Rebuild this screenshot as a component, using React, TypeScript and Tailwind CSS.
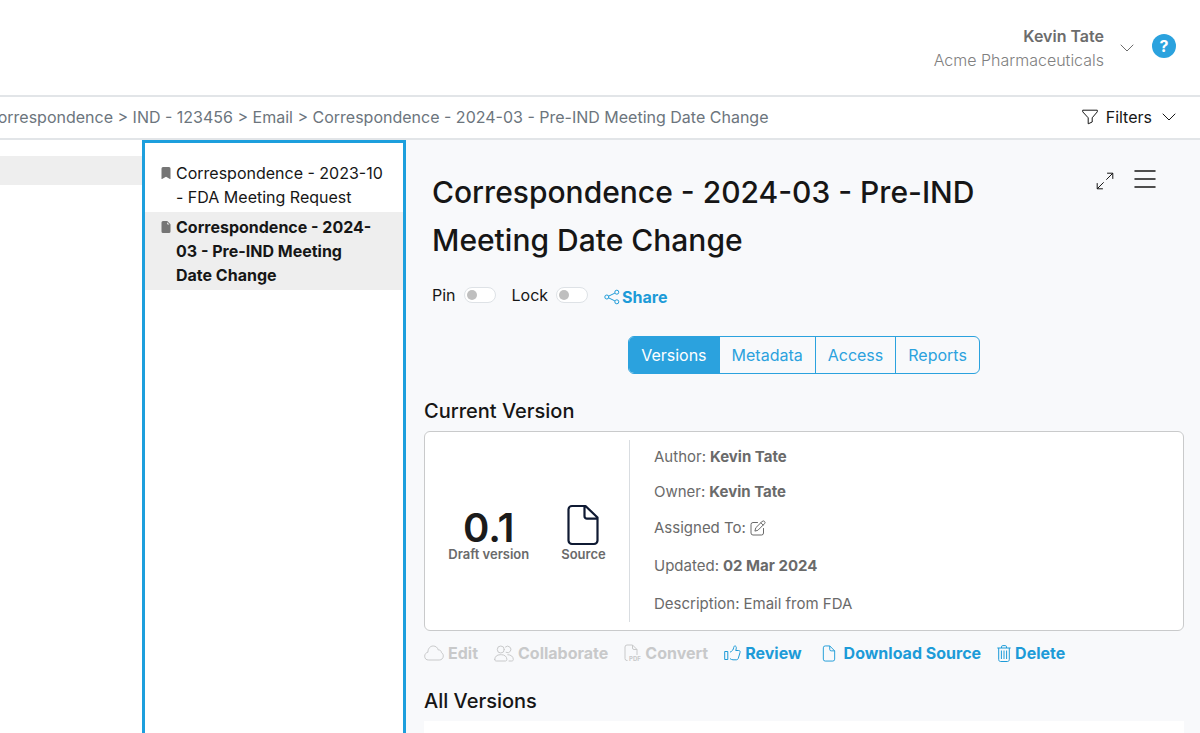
import React from 'react';
import { BsBookmarkFill, BsFileEarmarkFill } from 'react-icons/bs';

type IconProps = { className?: string };

const ChevronDown: React.FC<IconProps> = ({ className }) => (
  <svg viewBox="0 0 14 8" fill="none" stroke="currentColor" strokeLinecap="round" strokeLinejoin="round" className={className}>
    <path d="M1 1l6 6 6-6" />
  </svg>
);

const FunnelIcon: React.FC<IconProps> = ({ className }) => (
  <svg viewBox="0 0 16 16" fill="none" stroke="currentColor" strokeLinejoin="round" className={className}>
    <path d="M.7 1.2h14.6v1.6L10.2 8.8V13l-4 1.8v-6L.7 2.8z" />
  </svg>
);

const ExpandIcon: React.FC<IconProps> = ({ className }) => (
  <svg viewBox="0 0 18 18" fill="none" stroke="currentColor" strokeLinecap="round" strokeLinejoin="round" className={className}>
    <path d="M11.5 1.2h5.3v5.3M16.6 1.4l-6 6M6.5 16.8H1.2v-5.3M1.4 16.6l6-6" />
  </svg>
);

const MenuIcon: React.FC<IconProps> = ({ className }) => (
  <svg viewBox="0 0 22 18" fill="none" stroke="currentColor" strokeWidth="1.5" strokeLinecap="round" className={className}>
    <path d="M1 1h20M1 9h20M1 17h20" />
  </svg>
);

const ShareIcon: React.FC<IconProps> = ({ className }) => (
  <svg viewBox="0 0 16 16" fill="none" stroke="currentColor" className={className}>
    <circle cx="2.8" cy="8" r="2" />
    <circle cx="12.8" cy="3.2" r="2" />
    <circle cx="12.8" cy="12.8" r="2" />
    <path d="M4.7 7.1l6.2-3M4.7 8.9l6.2 3" />
  </svg>
);

const FileIcon: React.FC<IconProps> = ({ className }) => (
  <svg viewBox="0 0 14 18" fill="none" stroke="currentColor" strokeLinejoin="round" className={className}>
    <path d="M7.8 1H3a2 2 0 0 0-2 2v12a2 2 0 0 0 2 2h8a2 2 0 0 0 2-2V6.2zM7.8 1v3.7a1.5 1.5 0 0 0 1.5 1.5H13" />
  </svg>
);

const SourceIcon: React.FC<IconProps> = ({ className }) => (
  <svg viewBox="0 0 32 42" fill="none" stroke="currentColor" strokeWidth="2.2" strokeLinejoin="round" className={className}>
    <path d="M18.5 2H5a3.5 3.5 0 0 0-3.5 3.5v31A3.5 3.5 0 0 0 5 40h22a3.5 3.5 0 0 0 3.5-3.5V13.5zM17.5 2v10.2a2.5 2.5 0 0 0 2.5 2.5h10.5" />
  </svg>
);

const PencilSquareIcon: React.FC<IconProps> = ({ className }) => (
  <svg viewBox="0 0 16 16" fill="none" stroke="currentColor" strokeLinecap="round" strokeLinejoin="round" className={className}>
    <path d="M7.5 2.5H3a2 2 0 0 0-2 2V13a2 2 0 0 0 2 2h8.5a2 2 0 0 0 2-2V8.5" />
    <path d="M12.2 1.4a1.5 1.5 0 0 1 2.3 2.3L7.9 10.3l-3 .8.8-3zM10.9 2.8l2.3 2.3" />
  </svg>
);

const CloudIcon: React.FC<IconProps> = ({ className }) => (
  <svg viewBox="0 0 20 16" fill="none" stroke="currentColor" strokeLinejoin="round" className={className}>
    <path d="M4.8 15A4 4 0 0 1 .7 11.1c0-2 1.4-3.5 3.2-3.9C3.9 3.5 6.2 1 9.2 1c2.500 0 4.400 1.500 5 3.900 1.900-.1 3.100 1 3.200 2.700 1.200.5 1.900 1.800 1.900 3.300 0 2.400-1.700 4.100-4 4.100z" />
  </svg>
);

const UsersIcon: React.FC<IconProps> = ({ className }) => (
  <svg viewBox="0 0 20 17" fill="none" stroke="currentColor" strokeLinecap="round" strokeLinejoin="round" className={className}>
    <circle cx="6.8" cy="4.5" r="3.5" />
    <path d="M.7 14.5c0-2.900 2.300-4.800 5.500-4.800h1.200c3.200 0 5.500 1.900 5.500 4.800 0 1-.7 1.500-1.500 1.500H2.200c-.8 0-1.500-.5-1.500-1.500z" />
    <path d="M11.500 1.900a3.300 3.300 0 1 1 .6 5.500M13.800 9.700c3.200 0 5.500 1.900 5.500 4.800 0 1-.7 1.500-1.500 1.500H15" />
  </svg>
);

const PdfIcon: React.FC<IconProps> = ({ className }) => (
  <svg viewBox="0 0 17 18" fill="none" stroke="currentColor" strokeLinejoin="round" className={className}>
    <path d="M3.5 16.5H3a2 2 0 0 1-2-2V3a2 2 0 0 1 2-2h5.5L13 5.5V11M8.5 1v3a1.5 1.5 0 0 0 1.5 1.5h3" />
    <text x="5" y="17" fill="currentColor" stroke="none" fontSize="6" fontWeight="700">PDF</text>
  </svg>
);

const ThumbIcon: React.FC<IconProps> = ({ className }) => (
  <svg viewBox="0 0 17 16" fill="none" stroke="currentColor" strokeLinejoin="round" className={className}>
    <path d="M.7 6.5h3.1v8H.7zM6 7.2c2.300-1 3.400-2.600 3.700-4.700.2-1.300.9-1.800 1.700-1.500 1.100.4 1.200 2.200.3 4.500h3c1 0 1.700.8 1.400 1.800l-1.800 6c-.3.900-.9 1.500-2 1.500H9c-1.300 0-2-.6-3-1.200" />
  </svg>
);

const TrashIcon: React.FC<IconProps> = ({ className }) => (
  <svg viewBox="0 0 14 17" fill="none" stroke="currentColor" strokeLinejoin="round" className={className}>
    <path d="M.3 3h13.4M4.5 3V1.8C4.5 1 5 .6 5.7.6h2.6c.7 0 1.2.4 1.2 1.2V3M1.7 3v11.500c0 1.200.7 2 1.900 2h6.800c1.200 0 1.900-.8 1.900-2V3M4.400 5.500v8.500M7 5.500v8.500M9.600 5.500v8.500" />
  </svg>
);

const documents = [
  { title: 'Correspondence - 2023-10 - FDA Meeting Request', Icon: BsBookmarkFill, selected: false },
  { title: 'Correspondence - 2024-03 - Pre-IND Meeting Date Change', Icon: BsFileEarmarkFill, selected: true },
];

const tabs = ['Versions', 'Metadata', 'Access', 'Reports'];

const Toggle: React.FC<{ label: string }> = ({ label }) => (
  <label className="flex items-center gap-2">
    {label}
    <input
      type="checkbox"
      role="switch"
      className="h-4 w-8 appearance-none rounded-full border border-[#dee2e6] bg-white before:ml-0.5 before:mt-0.5 before:block before:size-2.5 before:rounded-full before:bg-[#bfbfbf]"
    />
  </label>
);

const Header: React.FC = () => (
  <header className="flex h-[97px] items-center justify-end border-b-2 border-[#e2e5e8] pr-6">
    <button type="button" className="flex items-center gap-4 text-right text-[#6c6c6c]">
      <span>
        <span className="block font-semibold">Kevin Tate</span>
        <span className="block font-light text-[#808080]">Acme Pharmaceuticals</span>
      </span>
      <ChevronDown className="h-2 w-3.5" />
    </button>
    <button type="button" aria-label="Help" className="mb-1 ml-[18px] size-6 rounded-full bg-[#2ba2de] font-bold text-white">
      ?
    </button>
  </header>
);

const Breadcrumbs: React.FC = () => (
  <div className="flex h-[43px] items-center justify-between overflow-hidden border-b-2 border-[#e2e5e8] pr-6 pb-0.5">
    <nav aria-label="Breadcrumb" className="-ml-3.5 whitespace-nowrap text-[#6c757d]">
      <a href="#">Correspondence</a> &gt; <a href="#">IND - 123456</a> &gt; <a href="#">Email</a> &gt;{' '}
      <a href="#">Correspondence - 2024-03 - Pre-IND Meeting Date Change</a>
    </nav>
    <button type="button" className="flex items-center gap-2">
      <FunnelIcon className="size-4" />
      Filters
      <ChevronDown className="ml-0.5 h-2 w-3.5" />
    </button>
  </div>
);

const DocumentList: React.FC = () => (
  <ul className="w-[264px] shrink-0 border-3 border-b-0 border-[#1d9fdd] pt-[15px]">
    {documents.map(({ title, Icon, selected }) => (
      <li key={title} className={selected ? 'bg-[#eeeeee] pr-3 font-bold' : ''}>
        <a href="#" className="flex gap-1 py-[3px] pr-3 pl-[15px]">
          <Icon className="mt-1.5 size-3 shrink-0 text-[#757575]" />
          <span>{title}</span>
        </a>
      </li>
    ))}
  </ul>
);

const CurrentVersion: React.FC = () => (
  <section>
    <h2 className="text-xl leading-6 font-medium">Current Version</h2>
    <div className="mt-2 flex rounded-md border border-[#c9cacb] bg-white py-2 text-[#6a6a6a]">
      <div className="flex w-[205px] shrink-0 items-center justify-center gap-8 border-r border-[#d9dde1] pt-1 text-[13px] leading-4 font-semibold">
        <div className="pt-1.5 text-center">
          <p className="text-[40px] leading-9 font-semibold text-[#1b1b1b]">0.1</p>
          <p>Draft version</p>
        </div>
        <div className="text-center">
          <SourceIcon className="mx-auto h-[42px] w-8 text-[#0f1a33]" />
          <p>Source</p>
        </div>
      </div>
      <dl className="flex flex-col gap-3.5 py-1.5 pl-6 text-[15px] leading-6">
        <div className="flex gap-1 leading-[21px]">
          <dt>Author:</dt>
          <dd className="font-bold">Kevin Tate</dd>
        </div>
        <div className="flex gap-1 leading-[21px]">
          <dt>Owner:</dt>
          <dd className="font-bold">Kevin Tate</dd>
        </div>
        <div className="flex gap-1">
          <dt>Assigned To:</dt>
          <dd className="flex items-center">
            <button type="button" aria-label="Assign">
              <PencilSquareIcon className="size-4" />
            </button>
          </dd>
        </div>
        <div className="flex gap-1">
          <dt>Updated:</dt>
          <dd className="font-bold">02 Mar 2024</dd>
        </div>
        <div className="flex gap-1">
          <dt>Description:</dt>
          <dd>Email from FDA</dd>
        </div>
      </dl>
    </div>
  </section>
);

const VersionActions: React.FC = () => (
  <div className="mt-2.5 flex gap-4 font-bold text-[#1d9bd8]">
    <button type="button" disabled className="flex items-center gap-1 text-[#c8c9ca]">
      <CloudIcon className="h-4 w-5" />
      Edit
    </button>
    <button type="button" disabled className="flex items-center gap-1 text-[#c8c9ca]">
      <UsersIcon className="h-[17px] w-5" />
      Collaborate
    </button>
    <button type="button" disabled className="flex items-center gap-1 text-[#c8c9ca]">
      <PdfIcon className="h-[18px] w-[17px]" />
      Convert
    </button>
    <button type="button" className="flex items-center gap-1">
      <ThumbIcon className="h-4 w-[17px]" />
      Review
    </button>
    <button type="button" className="ml-1 flex items-center gap-2">
      <FileIcon className="h-[17px] w-3.5" />
      Download Source
    </button>
    <button type="button" className="flex items-center gap-1">
      <TrashIcon className="h-[17px] w-3.5" />
      Delete
    </button>
  </div>
);

const App: React.FC = () => {
  return (
    <div className="flex min-h-screen flex-col overflow-x-hidden bg-white font-['Inter',sans-serif] text-base text-[#161616]">
      <Header />
      <Breadcrumbs />
      <div className="flex flex-1">
        <div className="w-[142px] shrink-0 pt-4">
          <div className="h-[29px] bg-[#eeeeee]" />
        </div>
        <DocumentList />

        <main className="flex min-w-0 flex-1 flex-col bg-[#f8f9fb] pr-4 pl-[18px]">
          <div className="flex items-start justify-between pt-7 pr-7 pl-2">
            <h1 className="max-w-[560px] text-[30px] leading-12 font-medium">
              Correspondence - 2024-03 - Pre-IND Meeting Date Change
            </h1>
            <div className="flex items-center gap-5">
              <button type="button" aria-label="Expand">
                <ExpandIcon className="mt-1 size-[18px]" />
              </button>
              <button type="button" aria-label="Menu">
                <MenuIcon className="h-[18px] w-[22px]" />
              </button>
            </div>
          </div>

          <div className="mt-[17px] flex items-center gap-4 pl-2">
            <Toggle label="Pin" />
            <Toggle label="Lock" />
            <button type="button" className="flex items-center gap-0.5 pt-1 font-bold text-[#1d9bd8]">
              <ShareIcon className="size-4" />
              Share
            </button>
          </div>

          <div role="tablist" className="mx-auto mt-[27px] flex divide-x divide-[#2ba2de] overflow-hidden rounded-md border border-[#2ba2de]">
            {tabs.map((tab, index) => (
              <button
                key={tab}
                type="button"
                role="tab"
                aria-selected={index === 0}
                className={index === 0 ? 'bg-[#2ba2de] px-3 py-1.5 text-white' : 'px-3 py-1.5 text-[#2ba2de]'}
              >
                {tab}
              </button>
            ))}
          </div>

          <div className="mt-[25px]">
            <CurrentVersion />
            <VersionActions />
          </div>

          <h2 className="mt-6 text-xl leading-6 font-medium">All Versions</h2>
          <div className="mt-2 flex-1 bg-white" />
        </main>
      </div>
    </div>
  );
};

export default App;
